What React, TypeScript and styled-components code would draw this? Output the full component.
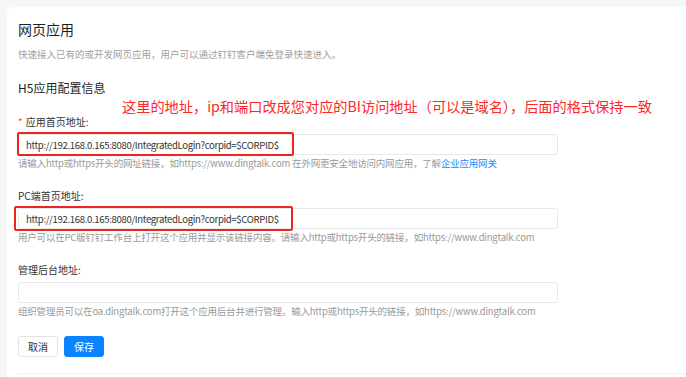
import styled, { createGlobalStyle } from 'styled-components'

const GlobalStyle = createGlobalStyle`
  html, body {
    margin: 0;
    padding: 0;
    background: #f5f6f7;
    overflow: hidden;
    font-family: "Noto Sans CJK SC", "Noto Sans", sans-serif;
  }
`

const Page = styled.div`
  padding: 7px 0 0 7px;
  width: 686px;
  height: 377px;
  box-sizing: border-box;
  overflow: hidden;
`

const Card = styled.div`
  background: #fff;
  border-radius: 6px 0 0 0;
  height: 100%;
  padding: 11px 0 0 11px;
  box-sizing: border-box;
`

const Title = styled.h1`
  margin: 0;
  font-size: 14px;
  line-height: 22px;
  font-weight: 400;
  color: #1f1f1f;
`

const Subtitle = styled.p`
  margin: 6px 0 0;
  font-size: 9.5px;
  line-height: 16px;
  color: #a0a0a0;
`

const Section = styled.div`
  position: relative;
  margin-top: 16px;
`

const SectionTitle = styled.h2`
  margin: 0;
  font-size: 12px;
  line-height: 20px;
  font-weight: 400;
  color: #1f1f1f;
`

const Annotation = styled.div`
  position: absolute;
  left: 104px;
  top: 18px;
  font-size: 14.2px;
  line-height: 20px;
  color: #ff2626;
  white-space: nowrap;
`

const Field = styled.div<{ $first?: boolean }>`
  margin-top: ${p => (p.$first ? 16 : 18)}px;
`

const Label = styled.div`
  font-size: 10px;
  line-height: 16px;
  color: #333;
`

const Star = styled.span`
  color: #ff4d4f;
  margin-right: 3px;
`

const InputWrap = styled.div`
  position: relative;
  margin-top: 4px;
  width: 540px;
`

const Input = styled.div`
  height: 21px;
  border: 1px solid #e8e8e8;
  border-radius: 3px;
  box-sizing: border-box;
  padding: 0 7px;
  display: flex;
  align-items: center;
  font-size: 9.6px;
  letter-spacing: -0.35px;
  color: #333;
  white-space: nowrap;
`

const Highlight = styled.div<{ $left: number; $width: number; $height: number }>`
  position: absolute;
  left: ${p => p.$left}px;
  top: -2px;
  width: ${p => p.$width}px;
  height: ${p => p.$height}px;
  border: 2px solid #ee2424;
  border-radius: 2px;
  box-sizing: border-box;
`

const Help = styled.div`
  margin-top: 1px;
  font-size: 9.5px;
  letter-spacing: -0.2px;
  line-height: 14px;
  color: #9a9a9a;
  white-space: nowrap;
`

const Link = styled.a`
  color: #1a8cff;
  text-decoration: none;
`

const Actions = styled.div`
  display: flex;
  gap: 6px;
  margin-top: 18px;
`

const Button = styled.button<{ $primary?: boolean }>`
  height: 21px;
  width: 40px;
  padding: 0;
  border-radius: 3px;
  font-family: inherit;
  font-size: 10px;
  border: 1px solid ${p => (p.$primary ? '#0a85ff' : '#e3e3e3')};
  background: ${p => (p.$primary ? '#0a85ff' : '#fff')};
  color: ${p => (p.$primary ? '#fff' : '#333')};
`

const Divider = styled.div`
  margin-top: 16px;
  border-top: 1px solid #efefef;
`

const URL = 'http://192.168.0.165:8080/IntegratedLogin?corpid=$CORPID$'

export default function App() {
  return (
    <Page>
      <GlobalStyle />
      <Card>
        <Title>网页应用</Title>
        <Subtitle>快速接入已有的或开发网页应用，用户可以通过钉钉客户端免登录快速进入。</Subtitle>

        <Section>
          <SectionTitle>H5应用配置信息</SectionTitle>
          <Annotation>这里的地址，ip和端口改成您对应的BI访问地址（可以是域名），后面的格式保持一致</Annotation>

          <Field $first>
            <Label><Star>*</Star>应用首页地址:</Label>
            <InputWrap>
              <Input>{URL}</Input>
              <Highlight $left={-1} $width={277} $height={24} />
            </InputWrap>
            <Help>
              请输入http或https开头的网址链接，如https://www.dingtalk.com 在外网更安全地访问内网应用，了解
              <Link>企业应用网关</Link>
            </Help>
          </Field>

          <Field>
            <Label>PC端首页地址:</Label>
            <InputWrap>
              <Input>{URL}</Input>
              <Highlight $left={-4} $width={279} $height={25} />
            </InputWrap>
            <Help>用户可以在PC版钉钉工作台上打开这个应用并显示该链接内容。请输入http或https开头的链接，如https://www.dingtalk.com</Help>
          </Field>

          <Field>
            <Label>管理后台地址:</Label>
            <InputWrap>
              <Input />
            </InputWrap>
            <Help>组织管理员可以在oa.dingtalk.com打开这个应用后台并进行管理。输入http或https开头的链接，如https://www.dingtalk.com</Help>
          </Field>

          <Actions>
            <Button>取消</Button>
            <Button $primary>保存</Button>
          </Actions>
          <Divider />
        </Section>
      </Card>
    </Page>
  )
}
